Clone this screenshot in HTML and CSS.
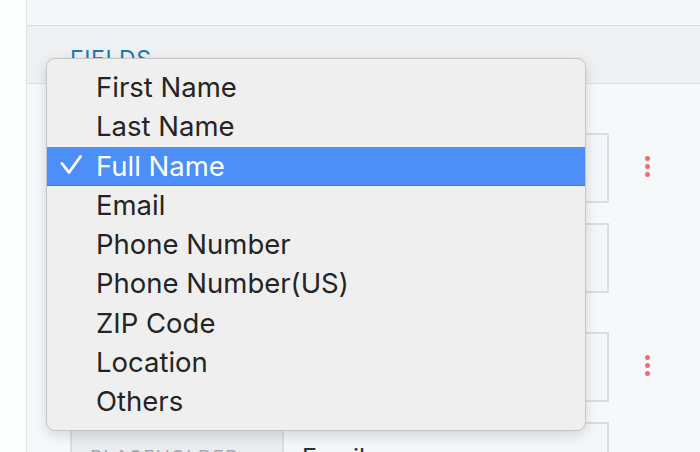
FILE: index.html
```html
<!DOCTYPE html>
<html lang="en">
<head>
<title>Form Fields</title>
<link rel="stylesheet" href="styles.css">
</head>

<body>
<div class="page">
  <div class="rail"></div>

  <div class="main">
    <div class="topbar"></div>
    <div class="section-head">Fields</div>

    <div class="fields">
      <!-- field 1 (covered by the open menu) -->
      <div class="group">
        <div class="rows">
          <div class="row">
            <span class="label"></span>
            <span class="value"></span>
          </div>
          <div class="row">
            <span class="label"></span>
            <span class="value"></span>
          </div>
        </div>
        <div class="kebab"><i></i><i></i><i></i></div>
      </div>

      <!-- field 2 -->
      <div class="group">
        <div class="rows">
          <div class="row">
            <span class="label"></span>
            <span class="value"></span>
          </div>
          <div class="row">
            <span class="label">Placeholder</span>
            <span class="value">Email</span>
          </div>
        </div>
        <div class="kebab"><i></i><i></i><i></i></div>
      </div>
    </div>
  </div>
</div>

<!-- open select menu, lies over the form -->
<ul class="menu">
  <li>First Name</li>
  <li>Last Name</li>
  <li class="selected">
    <svg class="check" width="22" height="22" viewBox="0 0 22 22">
      <path d="M2 8.5 L9 17.5 L20.5 1.5" fill="none" stroke="#fff"
        stroke-width="2.8" stroke-linecap="round" stroke-linejoin="round"/>
    </svg>
    Full Name
  </li>
  <li>Email</li>
  <li>Phone Number</li>
  <li>Phone Number(US)</li>
  <li>ZIP Code</li>
  <li>Location</li>
  <li>Others</li>
</ul>
</body>
</html>
```

FILE: styles.css
```css
body {
  margin: 0;
  font-family: Inter, "Liberation Sans", sans-serif;
  background: #f7f8f9;
  overflow: hidden;
}

.page {
  display: flex;
  height: 452px;
}

.rail {
  width: 26px;
  background: #fcfdfd;
  border-right: 1px solid #dfe5e9;
}

.main {flex: 1;}

.topbar {
  height: 26px;
  box-sizing: border-box;
  background: #f6f7f8;
  border-bottom: 1px solid #d7dee3;
}

.section-head {
  height: 58px;
  box-sizing: border-box;
  padding: 19px 0 0 43px;
  background: #eef0f1;
  border-bottom: 1px solid #dbe1e5;
  color: #1c79b9;
  font-size: 23px;
  letter-spacing: 0.6px;
  text-transform: uppercase;
}

.fields {
  padding: 49px 0 0 43px;
  display: flex;
  flex-direction: column;
  gap: 39px;
}

.group {
  display: flex;
  align-items: flex-start;
}

.rows {
  width: 539px;
  display: flex;
  flex-direction: column;
  gap: 20px;
}

.row {
  display: flex;
  height: 70px;
  box-sizing: border-box;
  border: 2px solid #d8dfe4;
  background: #f5f6f7;
}

.label {
  width: 212px;
  flex: none;
  background: #eaecee;
  border-right: 2px solid #d8dfe4;
  color: #a3a9ae;
  font-size: 19px;
  letter-spacing: 1px;
  text-transform: uppercase;
  padding: 22px 0 0 18px;
  box-sizing: border-box;
}

.value {
  padding: 19px 0 0 18px;
  font-size: 25px;
  color: #2b2f33;
}

.kebab {
  width: 5px;
  margin: 23px 0 0 36px;
  display: flex;
  flex-direction: column;
  gap: 3px;
}
.kebab i {
  width: 5px;
  height: 5px;
  border-radius: 50%;
  background: #f56a6f;
}

/* open select menu */
.menu {
  position: absolute;
  left: 46px;
  top: 58px;
  width: 540px;
  height: 373px;
  box-sizing: border-box;
  margin: 0;
  padding: 9px 0 0 0;
  list-style: none;
  background: #efefef;
  border: 1px solid #c4c6c8;
  border-radius: 9px;
  box-shadow: 0 4px 14px rgba(0, 0, 0, 0.14);
  font-size: 27.5px;
  color: #242424;
}

.menu li {
  position: relative;
  height: 39.3px;
  line-height: 39px;
  padding-left: 49px;
  box-sizing: border-box;
}

.menu .selected {
  background: #4c8ff8;
  border-bottom: 1px solid #2384f8;
  line-height: 38px;
  color: #fff;
}

.check {
  position: absolute;
  left: 13px;
  top: 8px;
}
```
